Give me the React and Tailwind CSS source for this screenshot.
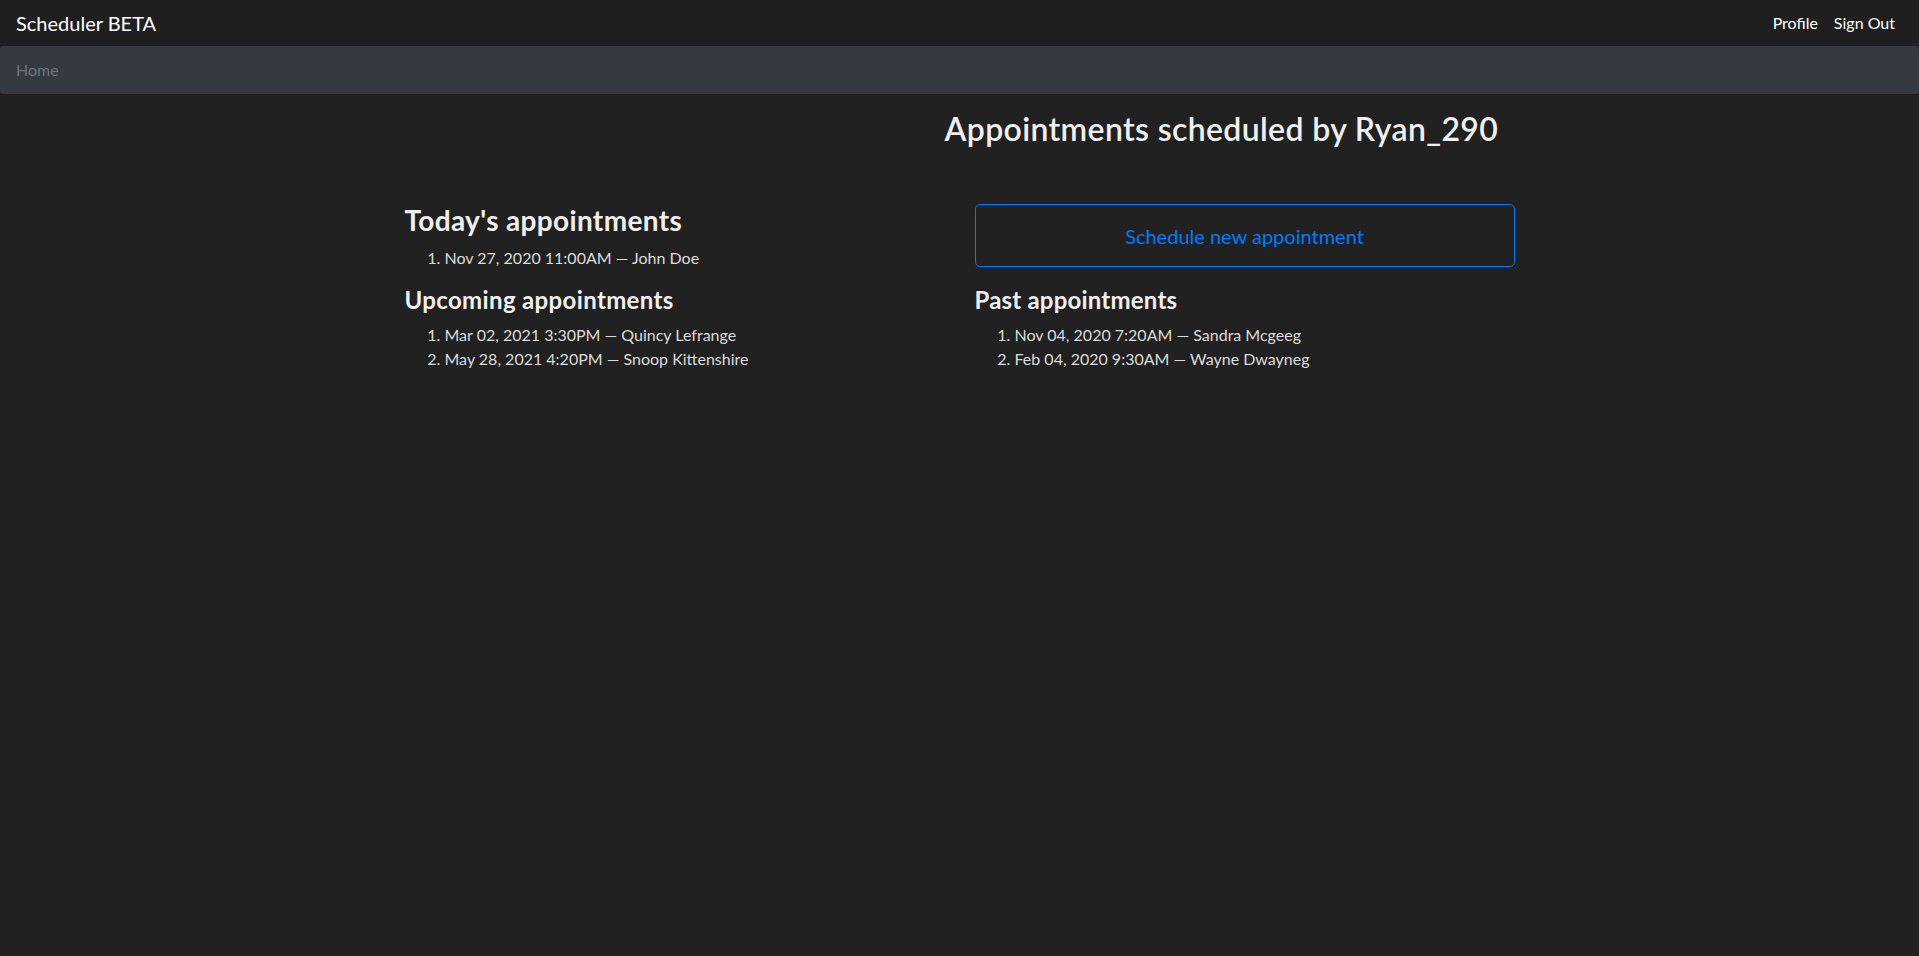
import React from 'react';

const today = [{ when: 'Nov 27, 2020 11:00AM', who: 'John Doe' }];
const upcoming = [
  { when: 'Mar 02, 2021 3:30PM', who: 'Quincy Lefrange' },
  { when: 'May 28, 2021 4:20PM', who: 'Snoop Kittenshire' },
];
const past = [
  { when: 'Nov 04, 2020 7:20AM', who: 'Sandra Mcgeeg' },
  { when: 'Feb 04, 2020 9:30AM', who: 'Wayne Dwayneg' },
];

function AppointmentList({ items }) {
  return (
    <ol className="list-decimal pl-10 mb-4 text-base leading-6 text-[#dcdcdc]">
      {items.map((a) => (
        <li key={a.when}>
          {a.when} — {a.who}
        </li>
      ))}
    </ol>
  );
}

export default function App() {
  return (
    <div className="min-h-screen bg-[#212121] text-[#f0f0f0] font-['Segoe_UI',Lato,sans-serif]">
      {/* Navbar */}
      <nav className="flex items-center justify-between h-[46px] px-4 bg-[#1f1f1f]">
        <span className="text-xl text-white">Scheduler BETA</span>
        <div className="flex text-base text-white">
          <a className="px-2">Profile</a>
          <a className="px-2">Sign Out</a>
        </div>
      </nav>

      {/* Breadcrumb */}
      <div className="h-12 px-4 flex items-center bg-[#343a40] rounded mb-4 text-[#6c757d]">
        Home
      </div>

      <div className="w-[1140px] mx-auto">
        <h2 className="text-[32px] leading-[1.2] font-semibold tracking-[0.35px] pl-[555px]">
          Appointments scheduled by Ryan_290
        </h2>

        <div className="grid grid-cols-2 mt-14">
          <div className="px-[15px]">
            <h3 className="text-[28px] leading-[1.2] font-bold tracking-[0.35px] mb-2">Today's appointments</h3>
            <AppointmentList items={today} />
          </div>
          <div className="px-[15px]">
            <button className="w-full h-[63px] border border-[#007bff] rounded-[5px] text-[#007bff] text-xl">
              Schedule new appointment
            </button>
          </div>

          <div className="px-[15px]">
            <h4 className="text-2xl leading-[1.2] font-bold tracking-[0.35px] mb-2">Upcoming appointments</h4>
            <AppointmentList items={upcoming} />
          </div>
          <div className="px-[15px]">
            <h4 className="text-2xl leading-[1.2] font-bold tracking-[0.2px] mb-2">Past appointments</h4>
            <AppointmentList items={past} />
          </div>
        </div>
      </div>
    </div>
  );
}
